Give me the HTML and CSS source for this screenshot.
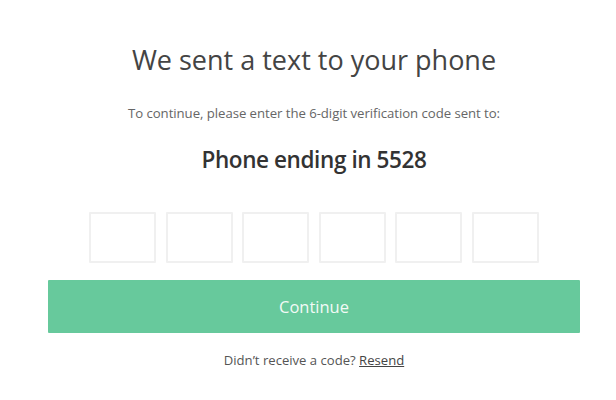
FILE: index.html
```html
<!DOCTYPE html>
<html>
<head>
<meta charset="utf-8">
<link rel="stylesheet" href="styles.css">
</head>
<body>
<main class="verify">
  <h1 class="title">We sent a text to your phone</h1>
  <p class="lead">To continue, please enter the 6-digit verification code sent to:</p>
  <p class="phone">Phone ending in 5528</p>
  <div class="code">
    <input class="digit" type="text" maxlength="1">
    <input class="digit" type="text" maxlength="1">
    <input class="digit" type="text" maxlength="1">
    <input class="digit" type="text" maxlength="1">
    <input class="digit" type="text" maxlength="1">
    <input class="digit" type="text" maxlength="1">
  </div>
  <button class="continue" type="button">Continue</button>
  <p class="resend">Didn’t receive a code? <a href="#" class="resend-link">Resend</a></p>
</main>
</body>
</html>
```

FILE: styles.css
```css
html, body {
  margin: 0;
  padding: 0;
  background: #fff;
}
body {
  font-family: "Open Sans", "Liberation Sans", sans-serif;
  color: #444;
}
.verify {
  width: 532px;
  margin: 0 0 0 48px;
  padding-top: 42px;
  display: flex;
  flex-direction: column;
  align-items: center;
}
.title {
  margin: 0;
  font-size: 27px;
  font-weight: 400;
  line-height: 36px;
  color: #444;
}
.lead {
  margin: 27px 0 0;
  font-size: 13.2px;
  line-height: 16px;
  color: #666;
  letter-spacing: -0.05px;
}
.phone {
  margin: 24px 0 0;
  font-size: 22.5px;
  font-weight: 600;
  line-height: 30px;
  color: #333;
  letter-spacing: -0.4px;
}
.code {
  margin-top: 37px;
  display: flex;
  gap: 9.6px;
}
.digit {
  box-sizing: border-box;
  width: 67px;
  height: 51px;
  margin: 0;
  border: 2px solid #f0f0f0;
  border-radius: 1px;
  background: #fff;
  outline: none;
}
.continue {
  margin-top: 17px;
  width: 532px;
  height: 53px;
  border: none;
  border-radius: 1px;
  background: #67c99c;
  color: #f2faf6;
  font-family: "Open Sans", "Liberation Sans", sans-serif;
  font-size: 16.5px;
  font-weight: 400;
  cursor: pointer;
}
.resend {
  margin: 19px 0 0;
  font-size: 13.1px;
  line-height: 16px;
  color: #555;
}
.resend-link {
  color: #444;
  text-decoration: underline;
}
```
